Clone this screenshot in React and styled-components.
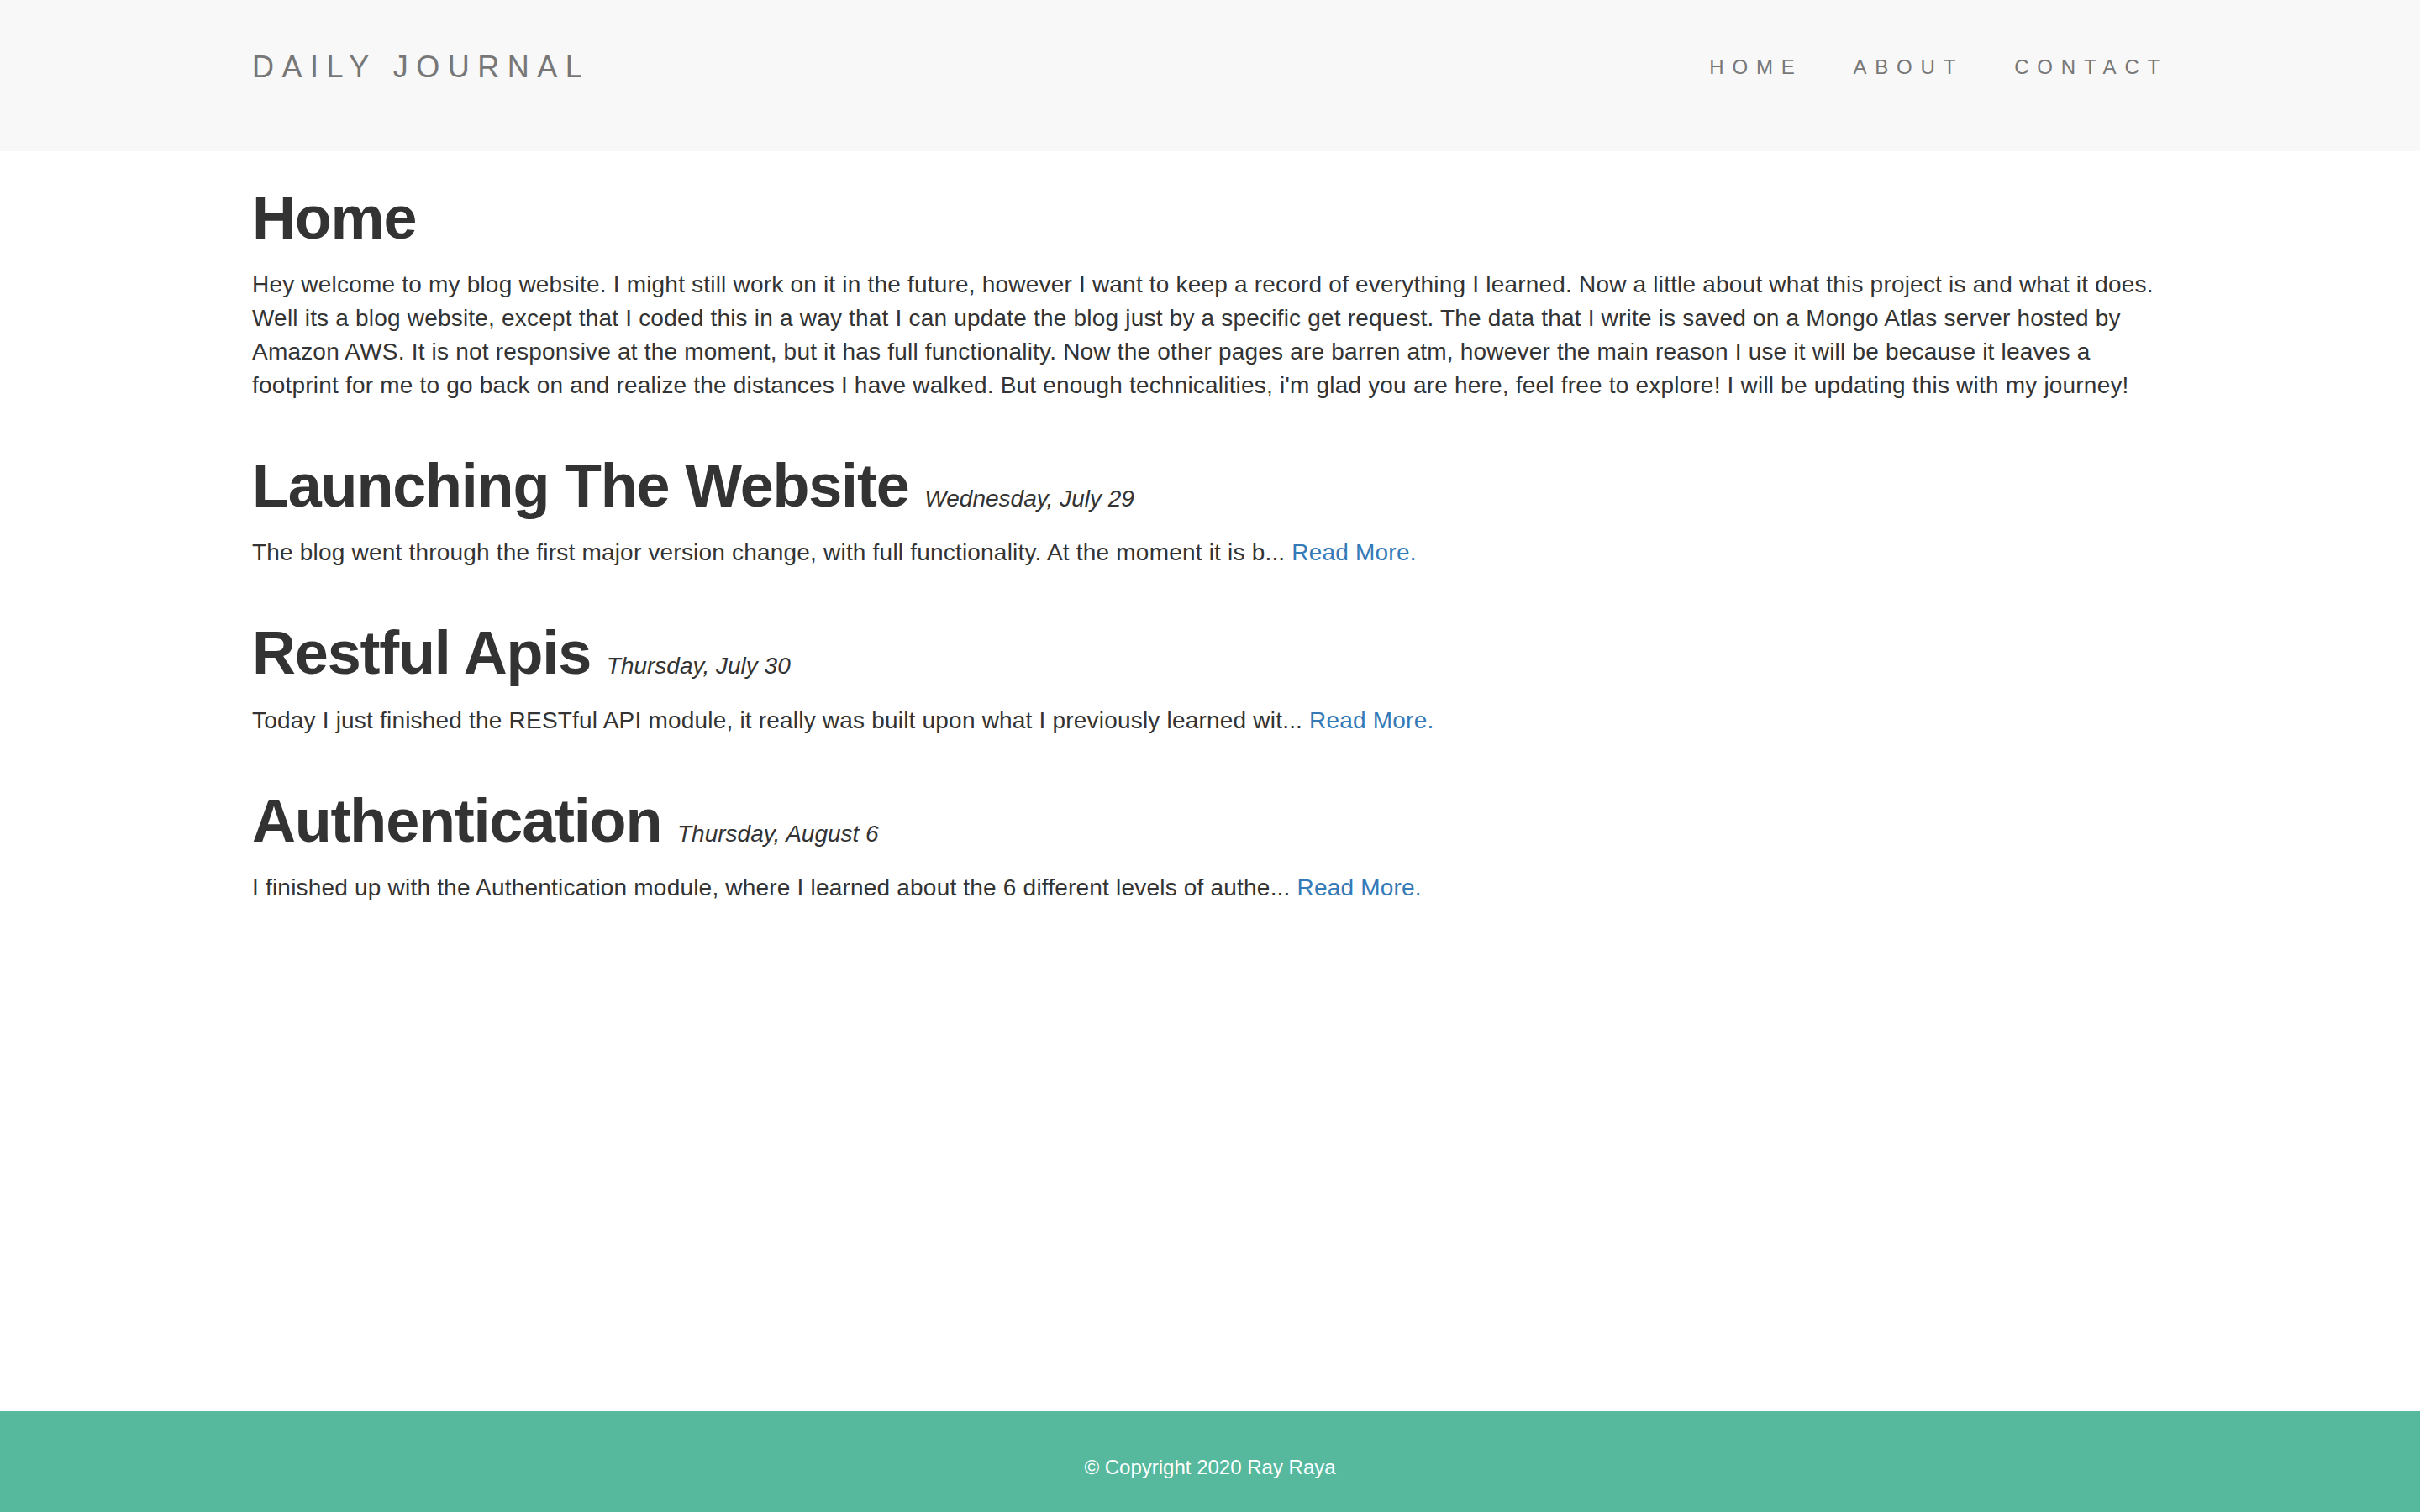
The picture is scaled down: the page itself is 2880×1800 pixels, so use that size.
import React from "react";
import styled, { createGlobalStyle } from "styled-components";

const GlobalStyle = createGlobalStyle`
  html, body {
    margin: 0;
    padding: 0;
  }
  body {
    font-family: "Liberation Sans", Arial, sans-serif;
    color: #333;
    background: #fff;
  }
  * {
    box-sizing: border-box;
  }
`;

const Page = styled.div`
  display: flex;
  flex-direction: column;
  min-height: 100vh;
`;

const Navbar = styled.header`
  background: #f8f8f8;
  height: 180px;
  padding-top: 30px;
`;

const Container = styled.div`
  width: 2340px;
  max-width: 100%;
  margin: 0 auto;
  padding: 0 30px;
`;

const NavRow = styled(Container)`
  display: flex;
  align-items: center;
  justify-content: space-between;
  height: 100px;
`;

const Brand = styled.a`
  font-size: 36px;
  letter-spacing: 9.5px;
  color: #777;
  text-decoration: none;
`;

const NavList = styled.ul`
  display: flex;
  list-style: none;
  margin: 0 -30px 0 0;
  padding: 0;
`;

const NavLink = styled.a`
  display: block;
  padding: 0 30px;
  font-size: 24px;
  letter-spacing: 9.8px;
  color: #777;
  text-decoration: none;
`;

const Main = styled(Container)`
  flex: 1;
  display: flex;
  flex-direction: column;
`;

const Heading = styled.h1`
  margin: 40px 0 20px;
  font-size: 72px;
  font-weight: 700;
  line-height: 1.1;
  letter-spacing: -1.2px;
  color: #333;
`;

const DateTag = styled.span`
  font-size: 28px;
  font-weight: 400;
  font-style: italic;
  letter-spacing: 0;
  color: #333;
`;

const Text = styled.p`
  margin: 0 0 20px;
  font-size: 28px;
  line-height: 40px;
  letter-spacing: 0.2px;
  color: #333;
`;

const ReadMore = styled.a`
  color: #337ab7;
  text-decoration: none;
`;

const Footer = styled.footer`
  height: 120px;
  background: #56b99e;
  text-align: center;
`;

const FooterText = styled.p`
  margin: 47px 0 0;
  font-size: 24px;
  line-height: 40px;
  color: #fff;
`;

const posts = [
  {
    title: "Launching The Website",
    date: "Wednesday, July 29",
    excerpt:
      "The blog went through the first major version change, with full functionality. At the moment it is b...",
  },
  {
    title: "Restful Apis",
    date: "Thursday, July 30",
    excerpt:
      "Today I just finished the RESTful API module, it really was built upon what I previously learned wit...",
  },
  {
    title: "Authentication",
    date: "Thursday, August 6",
    excerpt:
      "I finished up with the Authentication module, where I learned about the 6 different levels of authe...",
  },
];

const App = () => {
  return (
    <Page>
      <GlobalStyle />
      <Navbar>
        <NavRow>
          <Brand href="#">DAILY JOURNAL</Brand>
          <NavList>
            <li><NavLink href="#">HOME</NavLink></li>
            <li><NavLink href="#">ABOUT</NavLink></li>
            <li><NavLink href="#">CONTACT</NavLink></li>
          </NavList>
        </NavRow>
      </Navbar>

      <Main>
        <Heading>Home</Heading>
        <Text>
          Hey welcome to my blog website. I might still work on it in the future, however I want to
          keep a record of everything I learned. Now a little about what this project is and what it
          does. Well its a blog website, except that I coded this in a way that I can update the blog
          just by a specific get request. The data that I write is saved on a Mongo Atlas server hosted
          by Amazon AWS. It is not responsive at the moment, but it has full functionality. Now the
          other pages are barren atm, however the main reason I use it will be because it leaves a
          footprint for me to go back on and realize the distances I have walked. But enough
          technicalities, i'm glad you are here, feel free to explore! I will be updating this with my
          journey!
        </Text>

        {posts.map((p, i) => (
          <React.Fragment key={i}>
            <Heading>
              {p.title} <DateTag>{p.date}</DateTag>
            </Heading>
            <Text>
              {p.excerpt} <ReadMore href="#">Read More.</ReadMore>
            </Text>
          </React.Fragment>
        ))}
      </Main>

      <Footer>
        <FooterText>© Copyright 2020 Ray Raya</FooterText>
      </Footer>
    </Page>
  );
};

export default App;
